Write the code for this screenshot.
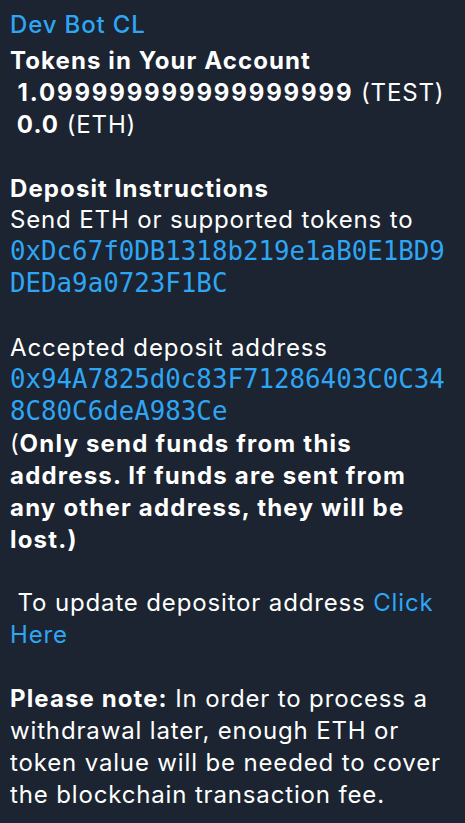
const mono = "font-['DejaVu_Sans_Mono',monospace] text-[25.8px] tracking-normal text-[#2ea6f5] break-all";

const App = () => {
  return (
    <div className="w-[465px] h-[823px] overflow-hidden bg-[#1b2430] text-white font-['Inter',sans-serif] text-[24px] tracking-[0.85px] leading-[31.9px] pl-[10px] pr-[10px] pt-[9px]">
      <div className="text-[#2ea6f5] font-medium">Dev Bot CL</div>
      <div className="mt-[4px] whitespace-pre-wrap">
        <div className="font-bold tracking-[1.1px]">Tokens in Your Account</div>
        <div>
          <span className="font-bold tracking-[1.85px]"> 1.099999999999999999</span> (TEST)
        </div>
        <div>
          <span className="font-bold tracking-[1.1px]"> 0.0</span> (ETH)
        </div>
        <div>&nbsp;</div>
        <div className="font-bold tracking-[1.1px]">Deposit Instructions</div>
        <div>Send ETH or supported tokens to</div>
        <div className={mono}>0xDc67f0DB1318b219e1aB0E1BD9DEDa9a0723F1BC</div>
        <div>&nbsp;</div>
        <div>Accepted deposit address</div>
        <div className={mono}>0x94A7825d0c83F71286403C0C348C80C6deA983Ce</div>
        <div>
          (<span className="font-bold tracking-[1.2px]">Only send funds from this address. If funds are sent from any other address, they will be lost.)</span>
        </div>
        <div>&nbsp;</div>
        <div>
          {" "}To update depositor address <span className="text-[#2ea6f5]">Click Here</span>
        </div>
        <div>&nbsp;</div>
        <div>
          <span className="font-bold tracking-[1.1px]">Please note:</span> In order to process a withdrawal later, enough ETH or token value will be needed to cover the blockchain transaction fee.
        </div>
      </div>
    </div>
  );
};

export default App;
